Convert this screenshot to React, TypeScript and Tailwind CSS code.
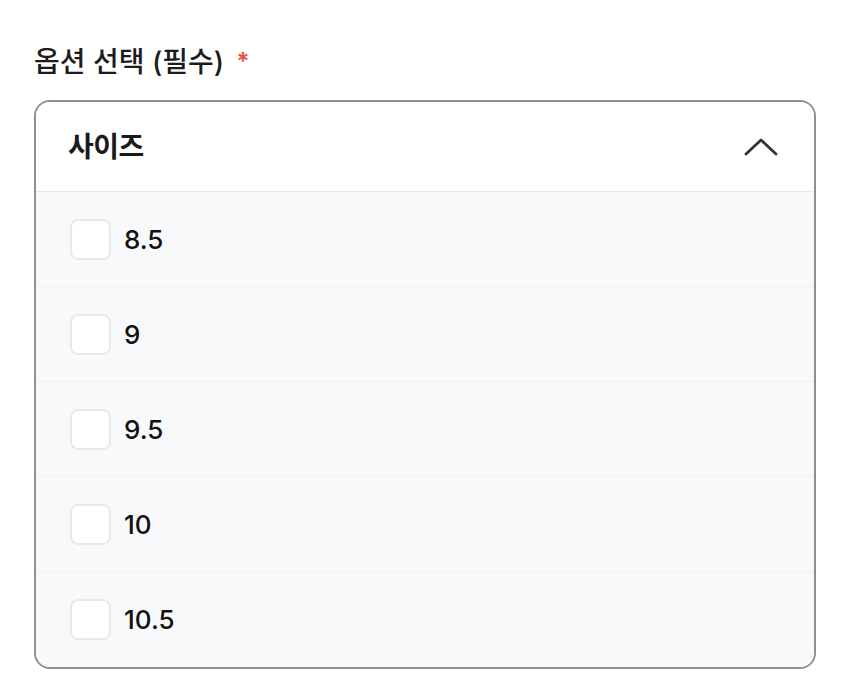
const sizes = ["8.5", "9", "9.5", "10", "10.5"];

export default function App() {
  return (
    <div
      className="min-h-screen bg-white px-[34px] pt-[44px]"
      style={{ fontFamily: '"Inter", "Noto Sans CJK KR", sans-serif' }}
    >
      <div className="flex items-center gap-[12px] text-[28px] font-medium text-[#1c1c1e] leading-[36px]">
        <span>옵션 선택 (필수)</span>
        <span className="text-[24px] font-bold text-[#e4573f]">*</span>
      </div>

      <div className="mt-[20px] w-[782px] rounded-[16px] border-2 border-[#8f8f8f] overflow-hidden">
        <div className="flex h-[90px] items-center justify-between border-b border-[#e6e8eb] bg-white pl-[32px] pr-[36px]">
          <span className="text-[28px] font-bold tracking-[-0.5px] text-[#1a1a1a]">사이즈</span>
          <svg width="34" height="20" viewBox="0 0 34 20" fill="none">
            <polyline
              points="2,17 17,3 32,17"
              stroke="#333"
              strokeWidth="2.8"
              strokeLinecap="round"
              strokeLinejoin="round"
            />
          </svg>
        </div>
        <div className="bg-[#f8f9fb]">
          {sizes.map((s, i) => (
            <label
              key={s}
              className={`flex h-[95px] items-center gap-[13px] pl-[34px] ${
                i < sizes.length - 1 ? "border-b border-[#edeff2]" : ""
              }`}
            >
              <span className="h-[41px] w-[41px] rounded-[8px] border-2 border-[#e8e9eb] bg-white" />
              <span className="text-[26px] font-medium text-[#111]">{s}</span>
            </label>
          ))}
        </div>
      </div>
    </div>
  );
}
